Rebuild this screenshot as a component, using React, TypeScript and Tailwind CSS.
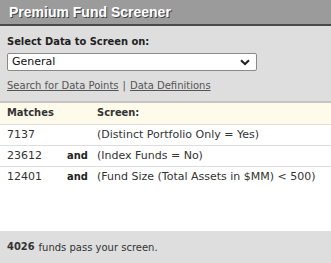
const rows = [
  { matches: "7137", op: "", screen: "(Distinct Portfolio Only = Yes)" },
  { matches: "23612", op: "and", screen: "(Index Funds = No)" },
  { matches: "12401", op: "and", screen: "(Fund Size (Total Assets in $MM) < 500)" },
];

export default function App() {
  return (
    <div className="w-[331px] h-[263px] flex flex-col bg-white text-[11px] text-[#333] font-['DejaVu_Sans',sans-serif] overflow-hidden">
      {/* header */}
      <div className="h-[26px] shrink-0 bg-[#9b9b9b] border-b-2 border-[#4a4a4a] pl-[9px] flex items-center">
        <span className="text-[14px] font-bold text-white [text-shadow:1px_1px_0_#444] font-['Liberation_Sans',sans-serif]">
          Premium Fund Screener
        </span>
      </div>

      {/* selector panel */}
      <div className="h-[77px] shrink-0 bg-[#dedede] border-b-2 border-[#c4c4c4] px-[7px] pt-[9px]">
        <div className="font-bold text-[#222] leading-[14px] font-['DejaVu_Sans_Condensed',sans-serif]">
          Select Data to Screen on:
        </div>
        <div className="mt-[4px] w-[250px] h-[18px] bg-white border border-[#8a8a8a] rounded-[2px] flex items-center justify-between pl-[4px] pr-[6px]">
          <span className="text-[#111] text-[11px]">General</span>
          <svg width="10" height="7" viewBox="0 0 10 7">
            <path d="M1 1.2 L5 5 L9 1.2" fill="none" stroke="#222" strokeWidth="2" />
          </svg>
        </div>
        <div className="mt-[8px] text-[#555] text-[10px] leading-[14px]">
          <span className="underline">Search for Data Points</span>
          <span className="mx-[4px]">|</span>
          <span className="underline">Data Definitions</span>
        </div>
      </div>

      {/* table */}
      <div className="flex flex-col">
        <div className="h-[22px] bg-[#fffbeb] border-b border-[#ddd] flex items-center font-bold text-[#333] font-['DejaVu_Sans_Condensed',sans-serif]">
          <div className="w-[97px] pl-[7px]">Matches</div>
          <div>Screen:</div>
        </div>
        {rows.map((r, i) => (
          <div
            key={i}
            className={`h-[21px] flex items-center ${i < rows.length - 1 ? "border-b border-[#ddd]" : ""}`}
          >
            <div className="w-[67px] pl-[7px]">{r.matches}</div>
            <div className="w-[30px] font-bold text-[#222] font-['DejaVu_Sans_Condensed',sans-serif]">{r.op}</div>
            <div>{r.screen}</div>
          </div>
        ))}
      </div>

      <div className="flex-1" />

      {/* footer */}
      <div className="h-[32px] shrink-0 bg-[#dedede] flex items-center pl-[7px] text-[#333] text-[10px]">
        <span className="font-bold mr-[4px] text-[11px] font-['DejaVu_Sans_Condensed',sans-serif]">4026</span>funds pass your screen.
      </div>
    </div>
  );
}
